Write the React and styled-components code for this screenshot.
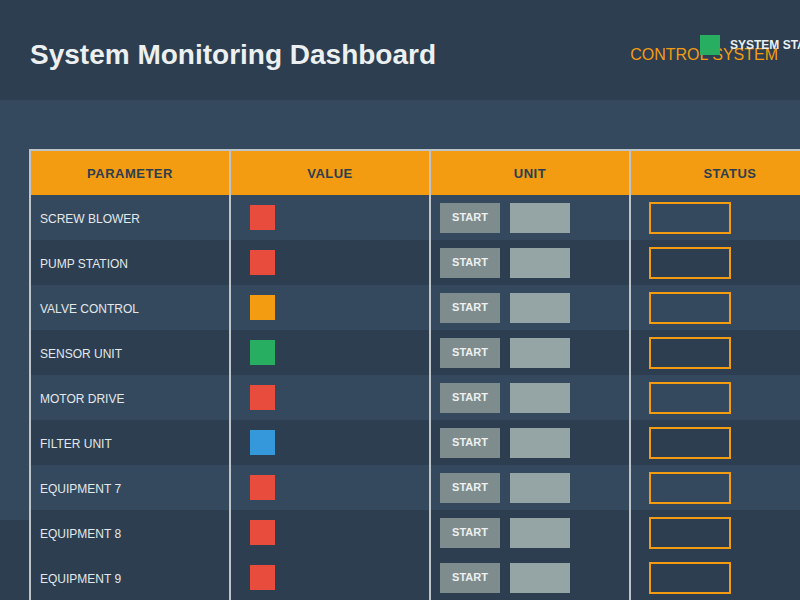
import React from 'react';
import styled, { createGlobalStyle } from 'styled-components';

const GlobalStyle = createGlobalStyle`
  html, body {
    margin: 0;
    padding: 0;
    background: #2c3e50;
    font-family: "Liberation Sans", Arial, sans-serif;
    overflow: hidden;
  }
`;

const Page = styled.div`
  width: 800px;
  height: 600px;
  overflow: hidden;
  position: relative;
`;

const Header = styled.header`
  height: 100px;
  box-sizing: border-box;
  padding: 10px 22px 0 30px;
  display: flex;
  align-items: center;
  justify-content: space-between;
  background: #2c3e50;
`;

const Title = styled.h1`
  margin: 0;
  font-size: 28px;
  font-weight: bold;
  color: #ecf0f1;
`;

const ControlLabel = styled.div`
  font-size: 16px;
  color: #f39c12;
`;

const StatusIndicator = styled.div`
  position: absolute;
  top: 35px;
  left: 700px;
  display: flex;
  align-items: center;
  gap: 10px;
  white-space: nowrap;
  font-size: 12px;
  font-weight: bold;
  color: #ecf0f1;
`;

const Dot = styled.span`
  width: 20px;
  height: 20px;
  background: #27ae60;
`;

const Panel = styled.main`
  height: 420px;
  box-sizing: border-box;
  padding: 49px 0 0 29px;
  background: #34495e;
`;

const Table = styled.div`
  width: 800px;
  border-top: 2px solid #bdc3c7;
`;

const Row = styled.div`
  display: grid;
  grid-template-columns: repeat(4, 200px);
  height: ${p => (p.$head ? 44 : 45)}px;
  background: ${p => (p.$head ? '#f39c12' : p.$alt ? '#2c3e50' : 'transparent')};
`;

const HeadCell = styled.div`
  border-left: 2px solid #bdc3c7;
  display: flex;
  align-items: center;
  justify-content: center;
  font-size: 13px;
  font-weight: bold;
  letter-spacing: 0.5px;
  color: #2c3e50;
`;

const Cell = styled.div`
  border-left: 2px solid #bdc3c7;
  display: flex;
  align-items: center;
  gap: 10px;
  padding-left: ${p => p.$pad}px;
  font-size: 12px;
  color: #e3e8ea;
`;

const Name = styled.span`
  padding-top: 2px;
`;

const Swatch = styled.span`
  width: 25px;
  height: 25px;
  background: ${p => p.$color};
`;

const StartButton = styled.button`
  width: 60px;
  height: 30px;
  border: none;
  padding: 0 0 2px;
  background: #7f8c8d;
  color: #ecf0f1;
  font-family: inherit;
  font-size: 11px;
  font-weight: bold;
`;

const Slot = styled.span`
  width: 60px;
  height: 30px;
  background: #95a5a6;
`;

const StatusBox = styled.span`
  width: 82px;
  height: 32px;
  box-sizing: border-box;
  border: 2px solid #f39c12;
`;

const colors = {
  red: '#e74c3c',
  orange: '#f39c12',
  green: '#27ae60',
  blue: '#3498db',
};

const rows = [
  ['SCREW BLOWER', 'red'],
  ['PUMP STATION', 'red'],
  ['VALVE CONTROL', 'orange'],
  ['SENSOR UNIT', 'green'],
  ['MOTOR DRIVE', 'red'],
  ['FILTER UNIT', 'blue'],
  ['EQUIPMENT 7', 'red'],
  ['EQUIPMENT 8', 'red'],
  ['EQUIPMENT 9', 'red'],
];

const App = () => (
  <Page>
    <GlobalStyle />
    <Header>
      <Title>System Monitoring Dashboard</Title>
      <ControlLabel>CONTROL SYSTEM</ControlLabel>
    </Header>
    <StatusIndicator>
      <Dot />
      SYSTEM STATUS
    </StatusIndicator>
    <Panel>
      <Table>
        <Row $head>
          <HeadCell>PARAMETER</HeadCell>
          <HeadCell>VALUE</HeadCell>
          <HeadCell>UNIT</HeadCell>
          <HeadCell>STATUS</HeadCell>
        </Row>
        {rows.map(([name, color], i) => (
          <Row key={name} $alt={i % 2 === 1}>
            <Cell $pad={9}>
              <Name>{name}</Name>
            </Cell>
            <Cell $pad={19}>
              <Swatch $color={colors[color]} />
            </Cell>
            <Cell $pad={9}>
              <StartButton>START</StartButton>
              <Slot />
            </Cell>
            <Cell $pad={18}>
              <StatusBox />
            </Cell>
          </Row>
        ))}
      </Table>
    </Panel>
  </Page>
);

export default App;
